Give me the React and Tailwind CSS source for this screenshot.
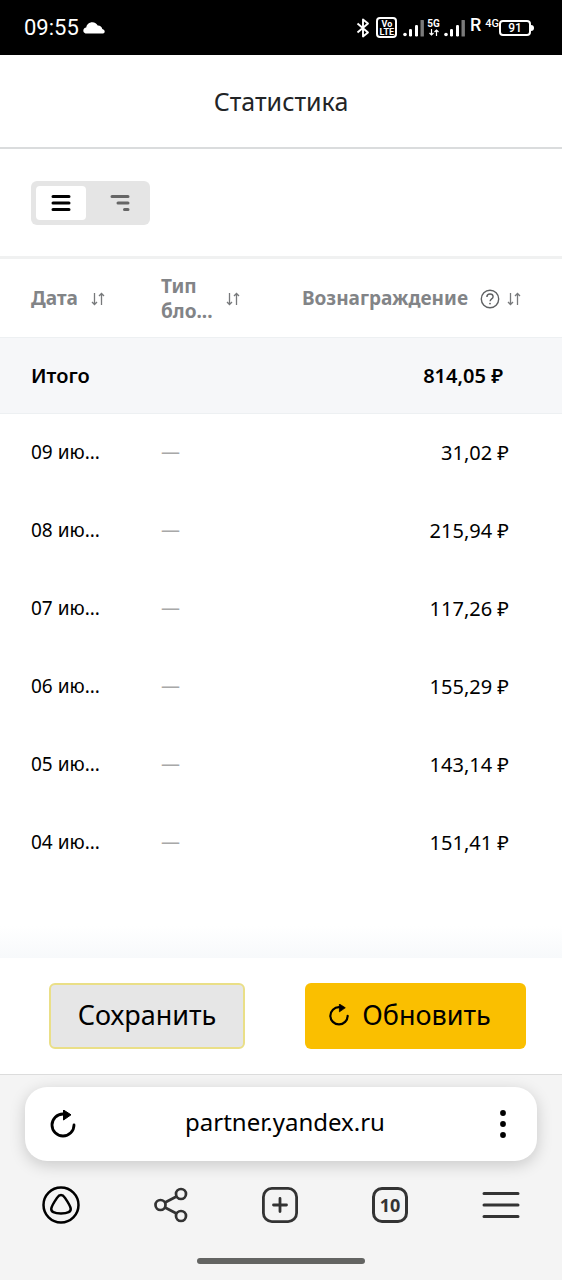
import React from 'react';

const rows = [
  { date: '09 ию...', reward: '31,02 ₽' },
  { date: '08 ию...', reward: '215,94 ₽' },
  { date: '07 ию...', reward: '117,26 ₽' },
  { date: '06 ию...', reward: '155,29 ₽' },
  { date: '05 ию...', reward: '143,14 ₽' },
  { date: '04 ию...', reward: '151,41 ₽' },
];

function Signal() {
  return (
    <svg width="22" height="18" viewBox="0 0 22 18" aria-hidden="true">
      <circle cx="2" cy="15.5" r="1.8" fill="#fff" />
      <rect x="6" y="10" width="3" height="7.5" rx="1.2" fill="#fff" />
      <rect x="12" y="6" width="3" height="11.5" rx="1.2" fill="#fff" />
      <rect x="17.5" y="1" width="3.4" height="16.5" rx="0.6" fill="#7a7a7a" />
    </svg>
  );
}

function StatusBar() {
  return (
    <div className="flex h-[55px] shrink-0 items-center justify-between bg-black pl-6 pr-7 text-white">
      <div className="flex items-center gap-1 font-['Roboto',sans-serif] text-[22px]">
        <span>09:55</span>
        <svg width="22" height="12" viewBox="0 0 22 12" fill="#fff" aria-hidden="true">
          <path d="M4 11.6C1.800 11.6.3 10.400.3 8.700c0-1.700 1.200-3 2.900-3.200C3.700 2.300 6.200.2 9.300.2c2.600 0 4.400 1.300 5.400 3.400 2.500-.1 4.100 1.200 4.600 3.300 1.500.4 2.400 1.300 2.400 2.500 0 1.300-1 2.200-2.500 2.200z" />
        </svg>
      </div>
      <div className="flex items-center font-['Roboto',sans-serif]">
        <svg width="14" height="20" viewBox="0 0 14 20" fill="none" stroke="#fff" strokeWidth="1.9" strokeLinejoin="round" aria-hidden="true">
          <path d="M1.500 5.500l10.500 9L7 18.500v-17l5 4-10.500 9" />
        </svg>
        <span className="ml-1.5 flex size-[21px] flex-col items-center justify-center rounded-sm border-2 border-white text-[9px] font-bold leading-[8px]">
          <span>Vo</span>
          <span>LTE</span>
        </span>
        <span className="ml-1.5"><Signal /></span>
        <span className="ml-0.5 flex flex-col items-center text-[10px] font-bold leading-[10px]">
          <span>5G</span>
          <svg width="10" height="7" viewBox="0 0 10 7" fill="none" stroke="#fff" strokeWidth="1.200" aria-hidden="true">
            <path d="M2.500 0v6M.5 4l2 2 2-2M7.500 7V1M5.500 3l2-2 2 2" />
          </svg>
        </span>
        <span className="ml-1"><Signal /></span>
        <span className="ml-1 pb-1.5 text-[18px] font-medium leading-[18px]">R</span>
        <span className="ml-1 pb-2 text-[11px] font-medium leading-[11px]">4G</span>
        <span className="flex h-4 w-8 items-center justify-center rounded-[4px] border-2 border-white text-[12px] font-medium leading-none">91</span>
        <span className="h-1.5 w-[3px] rounded-r-full bg-white" />
      </div>
    </div>
  );
}

function SortIcon() {
  return (
    <svg className="shrink-0" width="16" height="14" viewBox="0 0 16 14" fill="none" stroke="currentColor" strokeWidth="1.300" aria-hidden="true">
      <path d="M4.500 1v11.500M2 10l2.500 2.500L7 10M11.500 13V1.500M9 4l2.500-2.500L14 4" />
    </svg>
  );
}

function SortButton({ label }) {
  return (
    <button type="button" aria-label={label} className="text-[#77797b]">
      <SortIcon />
    </button>
  );
}

function HelpIcon() {
  return (
    <svg width="20" height="20" viewBox="0 0 20 20" fill="none" stroke="#5f6163" strokeWidth="1.400" aria-hidden="true">
      <circle cx="10" cy="10" r="8.700" />
      <path d="M6.900 8c0-1.900 1.300-3 3.100-3s3.100 1.100 3.100 2.700c0 2.200-3 2.200-3 4.600" />
      <circle cx="10" cy="14.600" r=".9" fill="#5f6163" stroke="none" />
    </svg>
  );
}

function ReloadIcon({ size }) {
  return (
    <svg width={size} height={size} viewBox="0 0 28 28" fill="none" aria-hidden="true">
      <path d="M25 15a11 11 0 1 1-11-11h2" stroke="currentColor" strokeWidth="2.800" strokeLinecap="round" />
      <path d="M14.500 0l7.500 4.800-7.500 5.200z" fill="currentColor" stroke="currentColor" strokeWidth="1" strokeLinejoin="round" />
    </svg>
  );
}

function ViewSwitch() {
  return (
    <div className="flex h-11 w-[119px] rounded-md bg-[#e5e5e5] p-[5px]">
      <button type="button" aria-label="Список" aria-pressed="true" className="flex w-[50px] items-center justify-center rounded-[4px] bg-white">
        <svg width="20" height="18" viewBox="0 0 20 18" fill="none" stroke="#000" strokeWidth="3" strokeLinecap="round" aria-hidden="true">
          <path d="M2 2.500h16M2 9h16M2 15.500h16" />
        </svg>
      </button>
      <button type="button" aria-label="Дерево" aria-pressed="false" className="flex flex-1 items-center justify-center pl-2">
        <svg width="20" height="18" viewBox="0 0 20 18" fill="none" stroke="#666" strokeWidth="3" strokeLinecap="round" aria-hidden="true">
          <path d="M2 2.500h16M8 9h10M14.500 15.500H18" />
        </svg>
      </button>
    </div>
  );
}

function StatsTable() {
  return (
    <table className="w-full table-fixed text-[20px] leading-[25px] text-black">
      <colgroup>
        <col className="w-[145px]" />
        <col className="w-[120px]" />
        <col />
      </colgroup>
      <thead>
        <tr className="h-[78px] border-b border-[#edf0f2] text-left text-[19px] text-[#828487]">
          <th className="pl-[31px] pt-0.5 font-bold">
            <div className="flex items-center gap-3">
              Дата <SortButton label="Сортировать по дате" />
            </div>
          </th>
          <th className="pl-4 pt-0.5 font-bold">
            <div className="flex items-center gap-3">
              <span>Тип<br />бло...</span> <SortButton label="Сортировать по типу блока" />
            </div>
          </th>
          <th className="pr-10 pt-0.5 font-bold">
            <div className="flex items-center justify-end">
              Вознаграждение
              <button type="button" aria-label="Справка" className="ml-3 mr-1.5"><HelpIcon /></button>
              <SortButton label="Сортировать по вознаграждению" />
            </div>
          </th>
        </tr>
      </thead>
      <tbody>
        <tr className="h-[76px] border-b border-[#edf0f2] bg-[#f6f7f9] font-semibold">
          <td className="pl-[31px]">Итого</td>
          <td />
          <td className="pr-[59px] text-right">814,05 ₽</td>
        </tr>
        {rows.map((row) => (
          <tr key={row.date} className="h-[78px]">
            <td className="pl-[31px] text-[19px]">{row.date}</td>
            <td className="pl-4 text-[19px] text-[#a8a8a8]">—</td>
            <td className="pr-[53px] text-right">{row.reward}</td>
          </tr>
        ))}
      </tbody>
    </table>
  );
}

function BrowserBar() {
  return (
    <footer className="flex shrink-0 flex-col border-t border-[#dcdcdc] bg-[#f4f4f4] pt-3">
      <div className="mx-[25px] flex h-[74px] items-center justify-between rounded-[22px] bg-white px-6 shadow-[0_4px_16px_rgba(0,0,0,0.18)]">
        <button type="button" aria-label="Перезагрузить"><ReloadIcon size={28} /></button>
        <a href="https://partner.yandex.ru" className="pb-1 text-[24px] leading-8 text-black">partner.yandex.ru</a>
        <button type="button" aria-label="Ещё" className="flex w-5 justify-center">
          <svg width="6" height="28" viewBox="0 0 6 28" aria-hidden="true">
            <circle cx="3" cy="3" r="2.900" />
            <circle cx="3" cy="14" r="2.900" />
            <circle cx="3" cy="25" r="2.900" />
          </svg>
        </button>
      </div>
      <nav className="mt-[25px] flex items-center justify-between px-[42px] text-[#333]">
        <button type="button" aria-label="Алиса" className="text-black">
          <svg width="38" height="38" viewBox="0 0 38 38" fill="none" stroke="currentColor" strokeWidth="2.500" aria-hidden="true">
            <circle cx="19" cy="19" r="17.500" />
            <path d="M19 9c1.700 0 2.700 1 4 2.900 2.400 3.500 5.300 8 5.700 10.700.4 3-2.700 4.900-9.700 4.900s-10.100-1.900-9.700-4.900c.4-2.700 3.300-7.200 5.700-10.700C16.300 10 17.300 9 19 9z" />
          </svg>
        </button>
        <button type="button" aria-label="Поделиться">
          <svg width="34" height="36" viewBox="0 0 34 36" fill="none" stroke="currentColor" strokeWidth="2.700" aria-hidden="true">
            <circle cx="6.500" cy="18" r="5" />
            <circle cx="27" cy="7" r="5" />
            <circle cx="27" cy="29" r="5" />
            <path d="M11 15.500l11.500-6M11 20.500l11.500 6" />
          </svg>
        </button>
        <button type="button" aria-label="Новая вкладка">
          <svg width="36" height="36" viewBox="0 0 36 36" fill="none" stroke="currentColor" strokeWidth="2.800" strokeLinecap="round" aria-hidden="true">
            <rect x="1.400" y="1.400" width="33.200" height="33.200" rx="8.500" />
            <path d="M18 11.500v13M11.500 18h13" />
          </svg>
        </button>
        <button type="button" className="flex size-9 items-center justify-center rounded-[10px] border-3 border-[#333] text-[18px] font-bold leading-none">
          10
        </button>
        <button type="button" aria-label="Меню">
          <svg width="38" height="28" viewBox="0 0 38 28" fill="none" stroke="currentColor" strokeWidth="3" strokeLinecap="round" aria-hidden="true">
            <path d="M2 2.500h34M2 14h34M2 25.500h34" />
          </svg>
        </button>
      </nav>
      <div className="mx-auto mt-[34px] mb-4 h-1.5 w-[168px] rounded-full bg-[#636462]" />
    </footer>
  );
}

export default function App() {
  return (
    <div className="flex min-h-screen flex-col bg-white font-['Noto_Sans',sans-serif]">
      <StatusBar />
      <header className="flex h-[94px] shrink-0 items-center justify-center border-b-2 border-[#dadcdd]">
        <h1 className="text-[25px] leading-8 text-[#222426]">Статистика</h1>
      </header>
      <main className="flex flex-1 flex-col">
        <div className="flex h-[110px] items-center border-b-3 border-[#f0f1f1] px-[31px]">
          <ViewSwitch />
        </div>
        <StatsTable />
        <div className="mt-auto h-8 bg-linear-to-t from-[#f7f9fb] to-white" />
      </main>
      <div className="flex h-[116px] shrink-0 items-center justify-between pl-[49px] pr-9 text-[27px] leading-9 text-black">
        <button type="button" className="h-[66px] w-[196px] rounded-md border-2 border-[#eadf87] bg-[#e6e6e6] pb-0.5">Сохранить</button>
        <button type="button" className="flex h-[66px] w-[221px] items-center justify-center gap-3 rounded-md bg-[#fabf00] pr-3 pb-0.5">
          <ReloadIcon size={22} />
          Обновить
        </button>
      </div>
      <BrowserBar />
    </div>
  );
}
